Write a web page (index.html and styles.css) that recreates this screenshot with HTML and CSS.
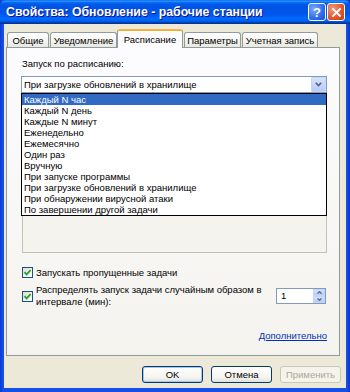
FILE: index.html
```html
<!DOCTYPE html>
<html>
<head>
<meta charset="utf-8">
<link rel="stylesheet" href="styles.css">
</head>
<body>
<div class="window">
  <div class="titlebar">
    <span class="title">Свойства: Обновление - рабочие станции</span>
    <span class="tb-btn help">?</span>
    <span class="tb-btn close"><svg width="9" height="9" viewBox="0 0 9 9"><path d="M1 1 L8 8 M8 1 L1 8" stroke="#fff" stroke-width="1.8" stroke-linecap="square"/></svg></span>
  </div>
  <div class="body">
    <div class="tabs">
      <div class="tab t1">Общие</div>
      <div class="tab t2">Уведомление</div>
      <div class="tab t3 active">Расписание</div>
      <div class="tab t4">Параметры</div>
      <div class="tab t5">Учетная запись</div>
    </div>
    <div class="panel">
      <div class="label">Запуск по расписанию:</div>
      <div class="combo-wrap">
        <div class="combo">
          <span class="combo-text">При загрузке обновлений в хранилище</span>
          <span class="arrow-btn"><svg width="7" height="5" viewBox="0 0 7 5"><path d="M0.8 0.8 L3.5 3.6 L6.2 0.8" fill="none" stroke="#4D6185" stroke-width="1.6"/></svg></span>
        </div>
        <ul class="dropdown">
          <li class="sel">Каждый N час</li>
          <li>Каждый N день</li>
          <li>Каждые N минут</li>
          <li>Еженедельно</li>
          <li>Ежемесячно</li>
          <li>Один раз</li>
          <li>Вручную</li>
          <li>При запуске программы</li>
          <li>При загрузке обновлений в хранилище</li>
          <li>При обнаружении вирусной атаки</li>
          <li>По завершении другой задачи</li>
        </ul>
      </div>
      <div class="groupbox"></div>
      <div class="check-row">
        <span class="checkbox"><svg width="9" height="9" viewBox="0 0 9 9"><path d="M1.5 4.2 L3.6 6.4 L7.6 2.2" fill="none" stroke="#21A121" stroke-width="1.7"/></svg></span>
        <span class="check-text">Запускать пропущенные задачи</span>
      </div>
      <div class="check-row two">
        <span class="checkbox"><svg width="9" height="9" viewBox="0 0 9 9"><path d="M1.5 4.2 L3.6 6.4 L7.6 2.2" fill="none" stroke="#21A121" stroke-width="1.7"/></svg></span>
        <span class="check-text">Распределять запуск задачи случайным образом в<br>интервале (мин):</span>
        <div class="spin">
          <span class="spin-val">1</span>
          <span class="spin-btns">
            <span class="spin-btn"><svg width="5" height="3" viewBox="0 0 5 3"><path d="M0.5 2.6 L2.5 0.6 L4.5 2.6" fill="none" stroke="#4D6185" stroke-width="1.2"/></svg></span>
            <span class="spin-btn"><svg width="5" height="3" viewBox="0 0 5 3"><path d="M0.5 0.4 L2.5 2.4 L4.5 0.4" fill="none" stroke="#4D6185" stroke-width="1.2"/></svg></span>
          </span>
        </div>
      </div>
      <div class="link-row"><a class="link">Дополнительно</a></div>
    </div>
    <div class="buttons">
      <span class="btn default">OK</span>
      <span class="btn">Отмена</span>
      <span class="btn disabled">Применить</span>
    </div>
  </div>
</div>
</body>
</html>
```
FILE: styles.css
```css
* { box-sizing: border-box; }
html, body { margin: 0; padding: 0; }
body {
  font-family: "Liberation Sans", Arial, sans-serif;
  font-size: 9.5px;
  color: #000;
  background: #fff;
}
.window {
  width: 350px;
  height: 392px;
  display: flex;
  flex-direction: column;
  background: linear-gradient(to right, #0A3BD0, #1650E6 3px, #1650E6 calc(100% - 3px), #0A36C4);
  padding: 0 4px 4px;
}
.titlebar {
  height: 24px;
  margin: 0 -4px;
  display: flex;
  align-items: center;
  padding: 0 5px 0 6px;
  background: linear-gradient(to bottom, #0058EE 0%, #3593FF 4%, #288EFF 6%, #127DFF 8%, #036FFC 10%, #0262EE 14%, #0057E5 20%, #0054E3 24%, #0055EB 56%, #005BF5 66%, #026AFE 76%, #0062EF 86%, #0052D6 92%, #0040AB 94%, #003092 100%);
  border-radius: 6px 6px 0 0;
}
.title {
  color: #fff;
  font-weight: bold;
  font-size: 12.3px;
  text-shadow: 1px 1px #0F1089;
  white-space: nowrap;
  flex: 1;
}
.tb-btn {
  width: 18px;
  height: 18px;
  border: 1px solid #fff;
  border-radius: 3px;
  display: flex;
  align-items: center;
  justify-content: center;
  color: #fff;
  font-weight: bold;
  font-size: 13px;
}
.help {
  background: radial-gradient(circle at 30% 30%, #7AA8FF, #2E6DEB 60%, #1B4FCF);
  margin-right: 1px;
}
.close {
  background: radial-gradient(circle at 30% 30%, #F29A7C, #E1562B 60%, #C43C16);
}
.body {
  flex: 1;
  background: #ECE9D8;
  padding: 5px 6px 0 2px;
  display: flex;
  flex-direction: column;
}
.tabs {
  display: flex;
  align-items: flex-end;
  height: 18px;
  margin-left: 1px;
  position: relative;
  z-index: 2;
}
.tab {
  height: 15px;
  border: 1px solid #919B9C;
  border-bottom: none;
  border-radius: 3px 3px 0 0;
  background: linear-gradient(to bottom, #FFFFFF, #F3F3EF 60%, #E8E7E0);
  display: flex;
  align-items: center;
  justify-content: center;
  white-space: nowrap;
  padding-top: 1px;
}
.t1 { width: 42px; margin-right: 1px; }
.t2 { width: 67px; }
.t3 { width: 66px; margin-right: 1px; }
.t4 { width: 57px; margin-right: 1px; }
.t5 { width: 76px; }
.tab.active {
  height: 19px;
  margin-bottom: -1px;
  background: #FCFCFE;
  border-top: 2px solid #F3B23A;
  padding-top: 0;
}
.panel {
  height: 309px;
  border: 1px solid #919B9C;
  background: linear-gradient(to bottom, #FCFCFE, #F4F3EE);
  padding: 10px 12px 0 14px;
  display: flex;
  flex-direction: column;
}
.label {
  line-height: 12px;
  padding-left: 1px;
}
.combo-wrap {
  position: relative;
  margin-top: 6px;
  width: 306px;
}
.combo {
  height: 17px;
  border: 1px solid #7F9DB9;
  background: #fff;
  display: flex;
  align-items: center;
}
.combo-text {
  flex: 1;
  padding-left: 2px;
  white-space: nowrap;
}
.arrow-btn {
  width: 15px;
  height: 15px;
  background: linear-gradient(to bottom, #D6E2FD, #B6CBF9);
  border: 1px solid #C6D6FB;
  border-radius: 1px;
  display: flex;
  align-items: center;
  justify-content: center;
}
.dropdown {
  position: absolute;
  left: 0;
  top: 17px;
  width: 306px;
  margin: 0;
  padding: 0;
  list-style: none;
  border: 1px solid #000;
  background: #fff;
  z-index: 3;
}
.dropdown li {
  line-height: 11px;
  height: 11px;
  padding-left: 2px;
  white-space: nowrap;
}
.dropdown li.sel {
  background: #316AC5;
  color: #fff;
}
.groupbox {
  margin-top: 7px;
  margin-left: 1px;
  width: 305px;
  height: 153px;
  border: 1px solid #C5C2B4;
  background: #F4F3EE;
}
.check-row {
  display: flex;
  align-items: center;
  margin-top: 13px;
  margin-left: 1px;
  line-height: 13px;
}
.check-row.two {
  margin-top: 5px;
  line-height: 12px;
}
.checkbox {
  width: 11px;
  height: 11px;
  border: 1px solid #1C5180;
  background: linear-gradient(135deg, #DCDCD7, #FFFFFF);
  display: flex;
  align-items: center;
  justify-content: center;
  margin-right: 3px;
  flex: none;
}
.check-text {
  flex: 1;
}
.spin {
  width: 50px;
  height: 16px;
  border: 1px solid #7F9DB9;
  background: #fff;
  display: flex;
  margin-right: 1px;
}
.spin-val {
  flex: 1;
  padding-left: 4px;
  line-height: 14px;
}
.spin-btns {
  width: 12px;
  display: flex;
  flex-direction: column;
}
.spin-btn {
  flex: 1;
  background: linear-gradient(to bottom, #D6E2FD, #B6CBF9);
  border: 1px solid #C6D6FB;
  display: flex;
  align-items: center;
  justify-content: center;
}
.link-row {
  margin-top: 22px;
  display: flex;
  justify-content: flex-end;
  line-height: 12px;
}
.link {
  color: #0033BB;
  text-decoration: underline;
}
.buttons {
  display: flex;
  justify-content: flex-end;
  gap: 8px;
  margin-top: 10px;
  margin-right: -1px;
}
.btn {
  width: 61px;
  height: 17px;
  border: 1px solid #003C74;
  border-radius: 3px;
  background: linear-gradient(to bottom, #FFFFFF, #F5F4EF 70%, #E3E1D6);
  display: flex;
  align-items: center;
  justify-content: center;
}
.btn.default {
  box-shadow: inset 0 0 0 1px #A9C3F2;
}
.btn.disabled {
  border-color: #C9C7BA;
  background: #F5F4EA;
  color: #ACA899;
}
```
